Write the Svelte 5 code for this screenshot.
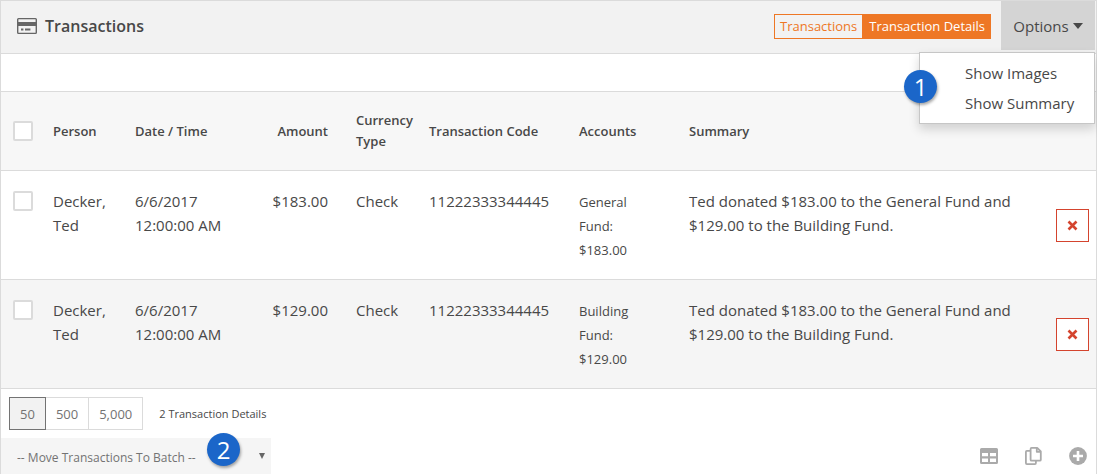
<script lang="ts">
  type Transaction = {
    id: number;
    person: string;
    date: string;
    time: string;
    amount: string;
    currency: string;
    code: string;
    account: string;
    summary: string;
  };

  const summary =
    'Ted donated $183.00 to the General Fund and $129.00 to the Building Fund.';

  const transactions: Transaction[] = [
    {
      id: 1,
      person: 'Decker, Ted',
      date: '6/6/2017',
      time: '12:00:00 AM',
      amount: '$183.00',
      currency: 'Check',
      code: '11222333344445',
      account: 'General Fund:',
      summary,
    },
    {
      id: 2,
      person: 'Decker, Ted',
      date: '6/6/2017',
      time: '12:00:00 AM',
      amount: '$129.00',
      currency: 'Check',
      code: '11222333344445',
      account: 'Building Fund:',
      summary,
    },
  ];

  const pageSizes = ['50', '500', '5,000'];

  let view = $state('details');
  let pageSize = $state('50');
  let menuOpen = $state(true);
  let selected = $state<number[]>([]);

  const allSelected = $derived(selected.length === transactions.length);

  function toggleAll() {
    selected = allSelected ? [] : transactions.map((t) => t.id);
  }
</script>

<section class="panel">
  <header class="panel-heading">
    <h1 class="panel-title">
      <svg width="20" height="16" viewBox="0 0 20 16" aria-hidden="true">
        <path
          fill="#666"
          fill-rule="evenodd"
          d="M1.5 0h17A1.5 1.5 0 0 1 20 1.5v13a1.5 1.5 0 0 1-1.5 1.5h-17A1.5 1.5 0 0 1 0 14.5v-13A1.5 1.5 0 0 1 1.5 0zM1.4 1.6v2.4h17.2V1.6a.3.3 0 0 0-.3-.3H1.7a.3.3 0 0 0-.3.3zM1.4 8v6.4c0 .2.1.3.3.3h16.6c.2 0 .3-.1.3-.3V8zM4 10.4h2.4v2.2H4zM8 10.4h5.4v2.2H8z"
        />
      </svg>
      Transactions
    </h1>

    <div class="view-toggle">
      <button type="button" class:active={view === 'list'} onclick={() => (view = 'list')}>
        Transactions
      </button>
      <button type="button" class:active={view === 'details'} onclick={() => (view = 'details')}>
        Transaction Details
      </button>
    </div>

    <div class="options">
      <button
        type="button"
        class="options-toggle"
        aria-expanded={menuOpen}
        onclick={() => (menuOpen = !menuOpen)}
      >
        Options
        <span class="caret"></span>
      </button>
      {#if menuOpen}
        <div class="options-menu">
          <a href="#images">Show Images</a>
          <a href="#summary">Show Summary</a>
          <span class="callout callout-menu">1</span>
        </div>
      {/if}
    </div>
  </header>

  <div class="filter-bar"></div>

  <table class="grid">
    <colgroup>
      <col class="col-check" />
      <col class="col-person" />
      <col class="col-date" />
      <col class="col-amount" />
      <col class="col-currency" />
      <col class="col-code" />
      <col class="col-accounts" />
      <col />
      <col class="col-delete" />
    </colgroup>
    <thead>
      <tr>
        <th class="check">
          <input type="checkbox" aria-label="Select all" checked={allSelected} onchange={toggleAll} />
        </th>
        <th>Person</th>
        <th>Date / Time</th>
        <th class="amount">Amount</th>
        <th>Currency Type</th>
        <th>Transaction Code</th>
        <th>Accounts</th>
        <th>Summary</th>
        <th></th>
      </tr>
    </thead>
    <tbody>
      {#each transactions as row (row.id)}
        <tr>
          <td class="check">
            <input type="checkbox" aria-label="Select row" value={row.id} bind:group={selected} />
          </td>
          <td>{row.person}</td>
          <td>{row.date}<br />{row.time}</td>
          <td class="amount">{row.amount}</td>
          <td>{row.currency}</td>
          <td>{row.code}</td>
          <td class="accounts">{row.account} {row.amount}</td>
          <td><p class="summary">{row.summary}</p></td>
          <td class="delete">
            <button type="button" class="btn-delete" aria-label="Delete">
              <svg width="11" height="11" viewBox="0 0 11 11" aria-hidden="true">
                <path d="M1.5 1.5l8 8M9.5 1.5l-8 8" stroke="#d4442e" stroke-width="2.6" />
              </svg>
            </button>
          </td>
        </tr>
      {/each}
    </tbody>
  </table>

  <div class="pager">
    <div class="page-sizes">
      {#each pageSizes as size}
        <button type="button" class:active={pageSize === size} onclick={() => (pageSize = size)}>
          {size}
        </button>
      {/each}
    </div>
    <span class="item-count">2 Transaction Details</span>
  </div>

  <footer class="actions">
    <div class="batch">
      <select aria-label="Batch">
        <option>-- Move Transactions To Batch --</option>
      </select>
      <span class="batch-arrow" aria-hidden="true"></span>
      <span class="callout callout-batch">2</span>
    </div>

    <div class="tools">
      <button type="button" aria-label="Export">
        <svg width="18" height="16" viewBox="0 0 18 16" aria-hidden="true">
          <path
            fill="#aaa"
            fill-rule="evenodd"
            d="M1.5 0h15A1.5 1.5 0 0 1 18 1.5v13a1.5 1.5 0 0 1-1.5 1.5h-15A1.5 1.5 0 0 1 0 14.5v-13A1.5 1.5 0 0 1 1.5 0zM2 5v3.2h6V5zM10 5v3.2h6V5zM2 10.4V14h6v-3.6zM10 10.4V14h6v-3.6z"
          />
        </svg>
      </button>
      <button type="button" aria-label="Copy">
        <svg width="17" height="18" viewBox="0 0 17 18" aria-hidden="true">
          <g fill="none" stroke="#aaa" stroke-width="1.8" stroke-linejoin="round">
            <path d="M5 3.9H1.9a1 1 0 0 0-1 1v11.2a1 1 0 0 0 1 1h8a1 1 0 0 0 1-1V14" />
            <path d="M6.6.9h5.6l3.6 3.6v8.2a1 1 0 0 1-1 1H6.6a1 1 0 0 1-1-1V1.9a1 1 0 0 1 1-1z" />
            <path d="M11.8 1v3.8h3.8" />
          </g>
        </svg>
      </button>
      <button type="button" aria-label="Add">
        <svg width="18" height="18" viewBox="0 0 18 18" aria-hidden="true">
          <circle cx="9" cy="9" r="8.9" fill="#aaa" />
          <path d="M9 4v10M4 9h10" stroke="#fff" stroke-width="2.6" />
        </svg>
      </button>
    </div>
  </footer>
</section>

<style>
  :global(body) {
    background: #fff;
  }

  .panel {
    border: 1px solid #dbdbdb;
    border-bottom: 0;
    color: #484848;
    font: 15px/24px 'Open Sans', sans-serif;
  }

  button,
  select {
    margin: 0;
    font: inherit;
    color: inherit;
    cursor: pointer;
  }

  .panel-heading {
    display: flex;
    align-items: flex-start;
    height: 52px;
    border-bottom: 1px solid #dbdbdb;
    background: #f2f2f2;
  }

  .panel-title {
    display: flex;
    align-items: center;
    gap: 8px;
    flex: 1;
    height: 49px;
    margin: 0;
    padding-left: 16px;
    font-size: 16px;
    font-weight: 600;
  }

  .view-toggle {
    display: flex;
    margin: 13px 10px 0 0;
  }

  .view-toggle button {
    height: 25px;
    padding: 0 5px;
    border: 1px solid #ee7725;
    background: transparent;
    color: #ee7725;
    font-size: 13px;
    line-height: 23px;
    white-space: nowrap;
  }

  .view-toggle .active {
    background: #ee7725;
    color: #fff;
  }

  .options {
    position: relative;
    margin-right: 1px;
  }

  .options-toggle {
    display: flex;
    align-items: center;
    justify-content: center;
    gap: 4px;
    width: 94px;
    height: 49px;
    padding: 0;
    border: 0;
    background: #d4d4d4;
  }

  .caret {
    border: 5px solid transparent;
    border-top: 6px solid #484848;
    border-bottom: 0;
  }

  .options-menu {
    position: absolute;
    top: 51px;
    right: 0;
    z-index: 1;
    display: flex;
    flex-direction: column;
    width: 176px;
    box-sizing: border-box;
    padding: 5px 0;
    border: 1px solid #c6c6c6;
    background: #fff;
    box-shadow: 0 5px 10px rgba(0, 0, 0, 0.16);
  }

  .options-menu a {
    padding: 3px 0 3px 45px;
    color: inherit;
    text-decoration: none;
    white-space: nowrap;
  }

  .callout {
    position: absolute;
    width: 33px;
    height: 33px;
    border-radius: 50%;
    background: #1b66c9;
    box-shadow: 1px 2px 3px rgba(0, 0, 0, 0.35);
    color: #fff;
    font-size: 24px;
    line-height: 33px;
    text-align: center;
  }

  .callout-menu {
    top: 17px;
    left: -16px;
  }

  .callout-batch {
    top: -5px;
    left: 206px;
  }

  .filter-bar {
    height: 37px;
    border-bottom: 1px solid #dbdbdb;
  }

  .grid {
    width: 100%;
    border-collapse: separate;
    border-spacing: 0;
    table-layout: fixed;
  }

  .col-check {
    width: 44px;
  }

  .col-person {
    width: 82px;
  }

  .col-date {
    width: 125px;
  }

  .col-amount {
    width: 96px;
  }

  .col-currency {
    width: 73px;
  }

  .col-code {
    width: 150px;
  }

  .col-accounts {
    width: 110px;
  }

  .col-delete {
    width: 48px;
  }

  th,
  td {
    padding: 18px 8px;
    border-bottom: 1px solid #dbdbdb;
    text-align: left;
    vertical-align: top;
  }

  th {
    height: 42px;
    background: #f7f7f7;
    font-size: 13px;
    font-weight: 600;
    line-height: 21px;
    vertical-align: middle;
  }

  td.accounts {
    padding: 19px 40px 17px 8px;
    font-size: 13px;
  }

  tbody tr:nth-child(even) {
    background: #f5f5f5;
  }

  .amount {
    padding-right: 20px;
    text-align: right;
  }

  .check {
    padding-left: 12px;
  }

  .check input {
    display: block;
    width: 20px;
    height: 20px;
    margin: 0;
    border: 2px solid #dbdbdb;
    border-radius: 2px;
    background: #fff;
    appearance: none;
  }

  td.check input {
    margin-top: 2px;
  }

  .check input:checked {
    background: #ee7725;
  }

  .summary {
    max-width: 340px;
    margin: 0;
  }

  .delete {
    padding: 0 7px 0 8px;
    vertical-align: middle;
  }

  .btn-delete {
    display: flex;
    align-items: center;
    justify-content: center;
    width: 33px;
    height: 33px;
    padding: 0;
    border: 1px solid #d4442e;
    background: #fff;
  }

  .pager {
    display: flex;
    align-items: center;
    gap: 16px;
    padding: 8px;
  }

  .page-sizes {
    display: flex;
  }

  .page-sizes button {
    height: 33px;
    padding: 0 10px;
    border: 1px solid #dbdbdb;
    background: #fff;
    color: #737373;
    font-size: 13px;
  }

  .page-sizes button + button {
    border-left: 0;
  }

  .page-sizes .active {
    border-color: #737373;
    background: #f2f2f2;
  }

  .item-count {
    font-size: 11px;
  }

  .actions {
    display: flex;
    align-items: center;
    justify-content: space-between;
  }

  .batch {
    position: relative;
  }

  .batch select {
    display: block;
    width: 270px;
    height: 36px;
    padding: 3px 16px 0;
    border: 0;
    border-radius: 0;
    background: #f5f5f5;
    color: #737373;
    font-size: 12px;
    appearance: none;
  }

  .batch-arrow {
    position: absolute;
    top: 15px;
    right: 6px;
    border: 3px solid transparent;
    border-top: 6px solid #666;
    border-bottom: 0;
    pointer-events: none;
  }

  .tools {
    display: flex;
    align-items: center;
    gap: 27px;
    padding-right: 9px;
  }

  .tools button {
    display: flex;
    padding: 0;
    border: 0;
    background: none;
  }
</style>
